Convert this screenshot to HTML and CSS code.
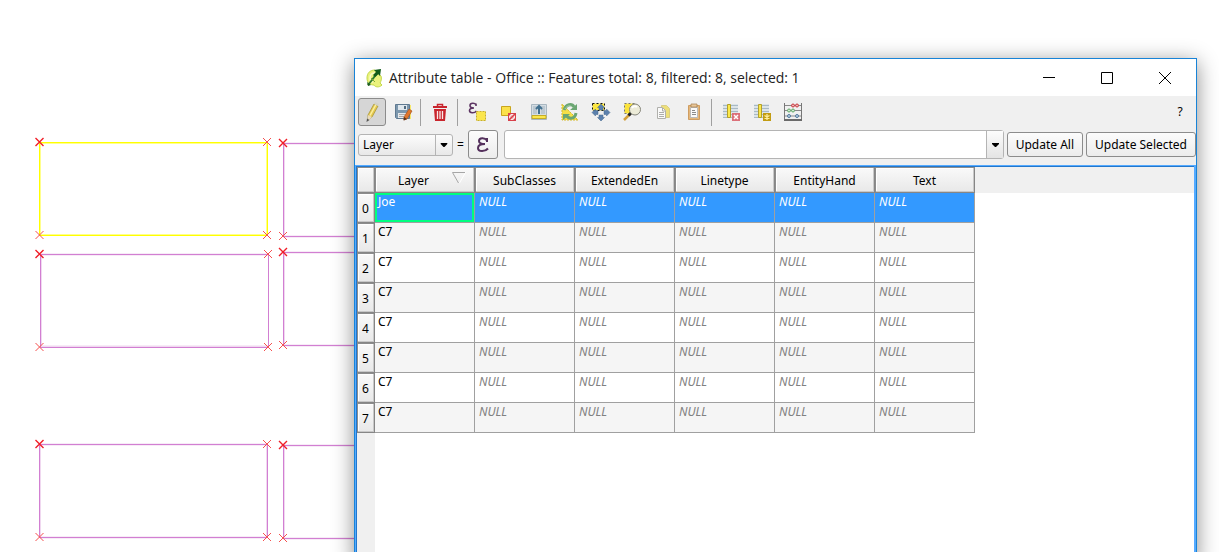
FILE: index.html
```html
<!DOCTYPE html>
<html lang="en">
<head>
<meta charset="utf-8">
<title>Attribute table - Office</title>
<link rel="stylesheet" href="styles.css">
</head>
<body>
<main class="desktop">
  <svg class="map" width="400" height="552" viewBox="0 0 400 552" aria-hidden="true">
    <defs><path id="v" d="M-4-4l8 8M4-4l-8 8"/></defs>
    <g class="parcel">
      <path class="halo" d="M40 254.500H268M40 346.500H268M41 254V347M283 143.500H400M283 236.500H400M284 143V236M283 252.500H400M283 345.500H400M284 252V345M40 444.500H267M40 537.500H267M267 444V537M40 444V537M283 445.500H400M283 538.500H400M284 445V538"/>
      <path d="M40.500 254.500H268.500V347.500H40.500ZM400 143.500H283.500V236.500H400M400 252.500H283.500V345.500H400M39.500 444.500H267.500V537.500H39.500ZM400 445.500H283.500V538.500H400"/>
    </g>
    <g class="parcel picked">
      <path class="halo" d="M40 143H267V235H40Z"/>
      <path d="M39.500 142.500H267.500V235.500H39.500Z"/>
    </g>
    <g class="vertex">
      <use href="#v" x="39.500" y="142"/><use href="#v" x="283" y="143"/><use href="#v" x="39.500" y="254"/><use href="#v" x="283" y="252"/><use href="#v" x="39.500" y="444"/><use href="#v" x="283" y="445"/>
    </g>
    <g class="vertex faint">
      <use href="#v" x="267" y="142"/><use href="#v" x="39.500" y="235"/><use href="#v" x="267" y="235"/><use href="#v" x="283" y="236"/><use href="#v" x="268" y="254"/><use href="#v" x="39.500" y="347"/><use href="#v" x="268" y="347"/><use href="#v" x="283" y="345"/><use href="#v" x="267" y="444"/><use href="#v" x="39.500" y="537"/><use href="#v" x="267" y="537"/><use href="#v" x="283" y="538"/>
    </g>
  </svg>

  <section class="window" aria-labelledby="title">
    <header class="titlebar">
      <svg class="logo" width="20" height="20" viewBox="0 0 20 20" aria-hidden="true">
        <path d="M11 2C6 2 3 5 3 10s3 7 7 7c1 2 5 3 8 0l-2-2c1-2 2-4 1-7z" fill="#eaf27c" stroke="#c3d84b"/>
        <path d="M11 5c-3 0-5 2-5 5 0 2 1 4 3 4" fill="none" stroke="#f8fbc8" stroke-width="1.500"/>
        <path d="M4 17L8 12l3-4 3-3" fill="none" stroke="#2f7d2c" stroke-width="2"/>
        <path d="M10 2l7-1-1 7-2-2-3 3-2-2 3-3z" fill="#125c1b"/>
        <path d="M3 14l4 3-3 1z" fill="#1f5c1d"/>
        <path d="M7 10l4 4" stroke="#7ea53a"/>
      </svg>
      <h1 class="title" id="title">Attribute table - Office :: Features total: 8, filtered: 8, selected: 1</h1>
      <div class="controls">
        <button class="control" aria-label="Minimize"><svg width="12" height="12" viewBox="0 0 12 12"><path d="M0 5.500h12"/></svg></button>
        <button class="control" aria-label="Maximize"><svg width="12" height="12" viewBox="0 0 12 12"><path d="M.5.5h11v11H.5z"/></svg></button>
        <button class="control" aria-label="Close"><svg width="12" height="12" viewBox="0 0 12 12"><path d="M0 0l12 12M12 0L0 12"/></svg></button>
      </div>
    </header>

    <div class="toolbar" role="toolbar" aria-label="Table tools">
      <button class="tool on" aria-label="Toggle editing" aria-pressed="true"><svg viewBox="0 0 20 20"><path d="M6 13L12 2l4 2-6 11-4 3z" fill="#e6c94f" stroke="#a79538" stroke-width=".8"/><path d="M8 13.500l6-11" stroke="#fbf0a0" stroke-width="1.500"/><path d="M6 13l4 2-4 4z" fill="#e8d9bc"/><path d="M12 2l4 2 1-2-4-2z" fill="#d2d2c8"/><path d="M5 16.500L4.500 20l3-2z" fill="#555"/></svg></button>
      <button class="tool" aria-label="Save edits"><svg viewBox="0 0 20 20"><path d="M4 3h14v14H4z" fill="#f7e96a"/><path d="M2.500 2.500h14v14h-13l-1-1z" fill="#7c97ad" stroke="#5f7990"/><path d="M5 3h9v5H5z" fill="#dfe7ed"/><path d="M11 4h2v3h-2z" fill="#506a80"/><path d="M5 11h8v5H5z" fill="#e6e9eb"/><path d="M6 12.500h6M6 14.500h5" stroke="#aaa"/><path d="M11 15l5-8 3 2-5 8-3 1z" fill="#e0762c" stroke="#a85520" stroke-width=".7"/><path d="M10.500 18.500l.5-3.500 3 2z" fill="#57351d"/></svg></button>
      <span class="sep"></span>
      <button class="tool" aria-label="Delete selected features"><svg viewBox="0 0 20 20"><path d="M3 4h14v2H3z" fill="#c9252d"/><path d="M7.500 4V2.500h5V4" stroke="#c9252d" stroke-width="1.500"/><path d="M4 7h12l-1 12H5z" fill="#c9252d"/><path d="M7.500 9v8M10 9v8M12.500 9v8" stroke="#f9e8e8" stroke-width="1.300"/></svg></button>
      <span class="sep"></span>
      <button class="tool" aria-label="Select by expression"><svg viewBox="0 0 20 20"><path d="M9 2.500C8 1 3 .5 3 3.500 3 5 4 6 7 6 4 6 2.500 7 2.500 8.500c0 3 5 3 7 .5M9 1.500V4" fill="none" stroke="#5d3563" stroke-width="1.600"/><path d="M9.500 9.500h9v9h-9z" fill="#fbe64d" stroke="#c9b028" stroke-dasharray="2 1"/></svg></button>
      <button class="tool" aria-label="Deselect all"><svg viewBox="0 0 20 20"><path d="M3.500 4.500h9v9h-9z" fill="#fbe14a" stroke="#c9a51d"/><path d="M10 11h8v8h-8z" fill="#d8404a"/><circle cx="14" cy="15" r="2.500" fill="#f1b6b8" stroke="#fff"/><path d="M12 17l4-4" stroke="#d8404a" stroke-width="1.500"/></svg></button>
      <button class="tool" aria-label="Move selection to top"><svg viewBox="0 0 20 20"><path d="M2.500 2.500h15v15h-15z" fill="#d4dde3" stroke="#a9b7c1"/><path d="M4 5h4M4 7h4M4 9h4M4 11h4M12 5h4M12 7h4M12 9h4M12 11h4" stroke="#a3b3bf"/><path d="M10 12V5M7 7l3-3 3 3" fill="none" stroke="#41708f" stroke-width="2"/><path d="M3 13.500h14v3H3z" fill="#fbe74b" stroke="#c5ac26"/></svg></button>
      <button class="tool" aria-label="Invert selection"><svg viewBox="0 0 20 20"><path d="M2 2v16h16z" fill="#f5df47" stroke="#d3b92e" stroke-dasharray="2 1"/><path d="M4 8c2-6 8-7 10-3M16 11c-1 6-7 7-10 2" fill="none" stroke="#6ba673" stroke-width="3"/><path d="M10 8h7V2zM10 12H3v6z" fill="#6ba673"/><path d="M5 7c2-4 6-4 8-1" fill="none" stroke="#a5cda8"/></svg></button>
      <button class="tool" aria-label="Pan map to selected rows"><svg viewBox="0 0 20 20"><path d="M1.500 1.500h12v7h-12z" fill="#fce640" stroke="#111" stroke-dasharray="2 2"/><path d="M10 2l3.500 3.500H12V8H8V5.500H6.500zM10 19l3.500-3.500H12V13H8v2.500H6.500zM1 10.500L4.500 7v1.500H7v4H4.500V14zM19 10.500L15.500 7v1.500H13v4h2.500V14z" fill="#5b80ad" stroke="#46698f" stroke-width=".5"/></svg></button>
      <button class="tool" aria-label="Zoom map to selected rows"><svg viewBox="0 0 20 20"><path d="M2.500 1.500h10v10h-10z" fill="#fbe33c" stroke="#777" stroke-dasharray="2 2"/><path d="M8 12l-6 6" stroke="#d4a03a" stroke-width="2.500"/><path d="M9 11l-2.500 2.500" stroke="#222" stroke-width="3"/><circle cx="13" cy="7.500" r="5.500" fill="#ecebd8" stroke="#85857a"/><path d="M10 6q2-3 5-1" fill="none" stroke="#fff" stroke-width="2"/></svg></button>
      <button class="tool" aria-label="Copy selected rows"><svg viewBox="0 0 20 20"><path d="M8.500 3.500h5l3 3v9h-8z" fill="#eddf79" stroke="#d9ce88"/><path d="M4.500 5.500h5l3 3v8h-8z" fill="#fafafa" stroke="#b0b0ac"/><path d="M9.500 6v3H12M6 10.500h5M6 12.500h5M6 14.500h5" fill="none" stroke="#adadaa"/></svg></button>
      <button class="tool" aria-label="Paste features"><svg viewBox="0 0 20 20"><path d="M4.500 3.500h11v14h-11z" fill="#e4b77b" stroke="#cf9d62"/><path d="M6.500 5.500h7v10h-7z" fill="#fafafa" stroke="#bbb"/><path d="M7 2h6v3H7z" fill="#e8c79a" stroke="#a57b4c" stroke-width=".7"/><path d="M8 8.500h3M8 10.500h4M8 12.500h4" stroke="#8b8b8b"/></svg></button>
      <span class="sep"></span>
      <button class="tool" aria-label="Delete field"><svg viewBox="0 0 20 20"><path d="M2 2h15v14H2z" fill="#dce4e9"/><path d="M2 3.500h15M2 6.500h15M2 9.500h15M2 12.500h15M2 15.500h15" stroke="#a9bac5"/><path d="M6.500 2.500h3v13h-3z" fill="#fbe94b" stroke="#b4a02b"/><path d="M11 11h8v8h-8z" fill="#dc717a"/><path d="M13 13l4 4M17 13l-4 4" stroke="#fff" stroke-width="1.500"/></svg></button>
      <button class="tool" aria-label="New field"><svg viewBox="0 0 20 20"><path d="M2 2h15v14H2z" fill="#dce4e9"/><path d="M2 3.500h15M2 6.500h15M2 9.500h15M2 12.500h15M2 15.500h15" stroke="#a9bac5"/><path d="M6.500 2.500h3v13h-3z" fill="#fbe94b" stroke="#b4a02b"/><path d="M11 11h8v8h-8z" fill="#c29c12"/><path d="M15 12v6M12.500 13.500l5 3M17.500 13.500l-5 3" stroke="#ffef9b" stroke-width="1.300"/></svg></button>
      <button class="tool" aria-label="Open field calculator"><svg viewBox="0 0 20 20"><path d="M1.500 1v18M18.500 1v18" stroke="#777"/><path d="M1 17h18v2H1z" fill="#6a6a6a"/><path d="M2 3.500h16M2 8.500h16M2 14h16" stroke="#888"/><g stroke-width="1"><path d="M8.500 3.500a1.500 1.500 0 1 0 3 0 1.500 1.500 0 1 0-3 0M12.500 3.500a1.500 1.500 0 1 0 3 0 1.500 1.500 0 1 0-3 0" fill="#f2b3b3" stroke="#c73a3f"/><path d="M4.500 8.500a1.500 1.500 0 1 0 3 0 1.500 1.500 0 1 0-3 0M8.500 8.500a1.500 1.500 0 1 0 3 0 1.500 1.500 0 1 0-3 0" fill="#cfebcf" stroke="#62a868"/><path d="M4.500 14a1.500 1.500 0 1 0 3 0 1.500 1.500 0 1 0-3 0M12.500 14a1.500 1.500 0 1 0 3 0 1.500 1.500 0 1 0-3 0" fill="#bcd3e6" stroke="#50789d"/></g></svg></button>
      <button class="tool help" aria-label="Help">?</button>
    </div>

    <form class="fieldbar">
      <span class="combo">
        <select class="field" aria-label="Field"><option>Layer</option></select>
        <svg class="arrow" width="17" height="20" viewBox="0 0 17 20" aria-hidden="true"><path d="M5 8h7v1l-3 3H8L5 9z"/></svg>
      </span>
      <span class="equals">=</span>
      <button class="expression" type="button" aria-label="Expression dialog"><svg width="16" height="18" viewBox="0 0 16 18"><path d="M12 2v4M12 4.500C10 1.500 4 1.500 4 5c0 2 2 3 6 3C5 8 3 9.500 3 12c0 4 7 4 10 .5" fill="none" stroke="#54305c" stroke-width="2"/></svg></button>
      <span class="formula">
        <input class="value" type="text" aria-label="Expression">
        <button class="drop" type="button" aria-label="Recent expressions"><svg width="17" height="20" viewBox="0 0 17 20"><path d="M5 8h7v1l-3 3H8L5 9z"/></svg></button>
      </span>
      <button class="update" type="button">Update All</button>
      <button class="update" type="button">Update Selected</button>
    </form>

    <div class="grid">
      <div class="head-fill">
      <table class="table">
        <thead>
          <tr><th class="corner"></th><th class="col" scope="col">Layer<svg class="sort" width="14" height="12" viewBox="0 0 14 12" aria-hidden="true"><path d="M13.500.5L7.500 11" stroke="#fff"/><path d="M13 .5H.5L6.500 11" stroke="#a6a6a6"/></svg></th><th class="col" scope="col">SubClasses</th><th class="col" scope="col">ExtendedEn</th><th class="col" scope="col">Linetype</th><th class="col" scope="col">EntityHand</th><th class="col" scope="col">Text</th></tr>
        </thead>
        <tbody>
          <tr class="selected"><th class="num" scope="row">0</th><td class="current">Joe</td><td class="null">NULL</td><td class="null">NULL</td><td class="null">NULL</td><td class="null">NULL</td><td class="null">NULL</td></tr>
          <tr><th class="num" scope="row">1</th><td>C7</td><td class="null">NULL</td><td class="null">NULL</td><td class="null">NULL</td><td class="null">NULL</td><td class="null">NULL</td></tr>
          <tr><th class="num" scope="row">2</th><td>C7</td><td class="null">NULL</td><td class="null">NULL</td><td class="null">NULL</td><td class="null">NULL</td><td class="null">NULL</td></tr>
          <tr><th class="num" scope="row">3</th><td>C7</td><td class="null">NULL</td><td class="null">NULL</td><td class="null">NULL</td><td class="null">NULL</td><td class="null">NULL</td></tr>
          <tr><th class="num" scope="row">4</th><td>C7</td><td class="null">NULL</td><td class="null">NULL</td><td class="null">NULL</td><td class="null">NULL</td><td class="null">NULL</td></tr>
          <tr><th class="num" scope="row">5</th><td>C7</td><td class="null">NULL</td><td class="null">NULL</td><td class="null">NULL</td><td class="null">NULL</td><td class="null">NULL</td></tr>
          <tr><th class="num" scope="row">6</th><td>C7</td><td class="null">NULL</td><td class="null">NULL</td><td class="null">NULL</td><td class="null">NULL</td><td class="null">NULL</td></tr>
          <tr><th class="num" scope="row">7</th><td>C7</td><td class="null">NULL</td><td class="null">NULL</td><td class="null">NULL</td><td class="null">NULL</td><td class="null">NULL</td></tr>
        </tbody>
      </table>
      </div>
    </div>
  </section>
</main>
</body>
</html>
```

FILE: styles.css
```css
* { box-sizing: border-box; }

body {
  margin: 0;
  background: #fff;
  color: #000;
  font: 12px/16px "Noto Sans", "DejaVu Sans", sans-serif;
}

button, input, select {
  margin: 0;
  color: inherit;
  font: inherit;
}

.desktop {
  position: relative;
  height: 100vh;
  overflow: hidden;
}

/* map canvas */
.map { display: block; fill: none; }
.parcel { stroke: #d27fd2; stroke-width: 1; }
.parcel .halo { stroke: #f0d8f0; stroke-width: 2; }
.picked { stroke: #ffff00; }
.picked .halo { stroke: #ffff8c; stroke-width: 2; }
.vertex { stroke: #f01e28; stroke-width: 1.4; }
.vertex.faint { stroke: #f5504f; stroke-width: 1; }

/* window */
.window {
  position: absolute;
  top: 58px;
  right: 22px;
  bottom: -12px;
  left: 354px;
  display: flex;
  flex-direction: column;
  border: 1px solid #1883d7;
  background: #f0f0f0;
  box-shadow: 0 4px 20px rgba(0, 0, 0, .45);
}

.titlebar {
  display: flex;
  align-items: center;
  height: 37px;
  padding: 0 2px 0 9px;
  background: #fff;
}
.title {
  flex: 1;
  margin: 0 0 0 5px;
  color: #222;
  font: 400 14px/20px "Open Sans", "Noto Sans", sans-serif;
  white-space: nowrap;
}
.controls { display: flex; }
.control {
  display: grid;
  place-items: center;
  width: 58px;
  height: 36px;
  padding: 0;
  border: 0;
  background: none;
}
.control svg { fill: none; stroke: #000; }

.toolbar {
  display: flex;
  align-items: center;
  gap: 3px;
  height: 34px;
  padding: 0 2px 2px 3px;
}
.tool {
  display: grid;
  place-items: center;
  width: 28px;
  height: 28px;
  padding: 0;
  border: 1px solid transparent;
  border-radius: 3px;
  background: none;
}
.tool svg { width: 20px; height: 20px; fill: none; }
.tool.on { border-color: #8c8c8c; background: #d6d6d6; }
.help { margin-left: auto; }
.sep {
  width: 3px;
  height: 27px;
  border-left: 1px solid #a0a0a0;
}

.fieldbar {
  display: flex;
  align-items: center;
  height: 29px;
  padding-left: 3px;
}
.combo { position: relative; display: flex; width: 95px; }
.field {
  width: 100%;
  height: 22px;
  padding: 0 20px 0 4px;
  border: 1px solid #b4b4b4;
  border-radius: 3px;
  appearance: none;
  background: linear-gradient(#fcfcfc, #e8e8e8);
}
.arrow {
  position: absolute;
  top: 1px;
  right: 1px;
  border-left: 1px solid #b4b4b4;
}
.equals { width: 15px; text-align: center; }
.expression, .update {
  border: 1px solid #8c8c8c;
  border-radius: 3px;
  background: linear-gradient(#fcfcfc, #ececec);
}
.expression {
  display: grid;
  place-items: center;
  width: 30px;
  height: 29px;
  padding: 0;
}
.formula {
  display: flex;
  flex: 1;
  height: 29px;
  margin: 0 3px 0 6px;
  border: 1px solid #b4b4b4;
  border-radius: 3px;
  background: #fff;
}
.value {
  flex: 1;
  min-width: 0;
  padding: 0 4px;
  border: 0;
  background: none;
}
.drop {
  display: grid;
  place-items: center;
  width: 17px;
  padding: 0;
  border: 0;
  border-left: 1px solid #b4b4b4;
  background: linear-gradient(#fcfcfc, #e4e4e4);
}
.update {
  height: 25px;
  padding: 0 8px;
  white-space: nowrap;
}
.update + .update { margin-left: 3px; }

/* attribute grid */
.grid {
  flex: 1;
  margin-top: 6px;
  border: 1px solid #55aaff;
  border-width: 1px 2px 0 1px;
  background: linear-gradient(90deg, #f0f0f0 19px, #fff 19px);
}
.head-fill {
  height: 100%;
  border: 1px solid #2277cc;
  border-width: 1px 0 0 1px;
  background: linear-gradient(#f0f0f0, #f0f0f0) 0 0 / 100% 26px no-repeat;
}
.table {
  width: 618px;
  border-spacing: 0;
  table-layout: fixed;
}
.table th, .table td { border: 0 solid #a0a0a0; border-width: 0 1px 1px 0; }
.table th {
  padding: 2px 0 0;
  border-color: #868686;
  background: linear-gradient(#fafafa, #e8e8e8);
  box-shadow: inset 1px 1px #8c8c8c, inset -1px -1px #c8c8c8, inset 2px 2px #fff;
  font-weight: 400;
}
.table .corner { width: 18px; height: 26px; }
.col { position: relative; width: 100px; }
.table .col:nth-child(2) { padding-right: 22px; }
.sort { position: absolute; top: 5px; right: 8px; fill: none; }
.table td {
  height: 30px;
  padding: 1px 3px 0;
  vertical-align: top;
}
.table tr:nth-child(even) td { background: #f5f5f5; }
.table tr:nth-child(odd) td { background: #fff; }
.table .null {
  padding-left: 4px;
  color: #808080;
  font-style: italic;
}
.table tr.selected:nth-child(n) td {
  background: #3399ff;
  color: #fff;
}
.table .selected .current { box-shadow: inset 0 0 0 2px #00ff7f; }
```
